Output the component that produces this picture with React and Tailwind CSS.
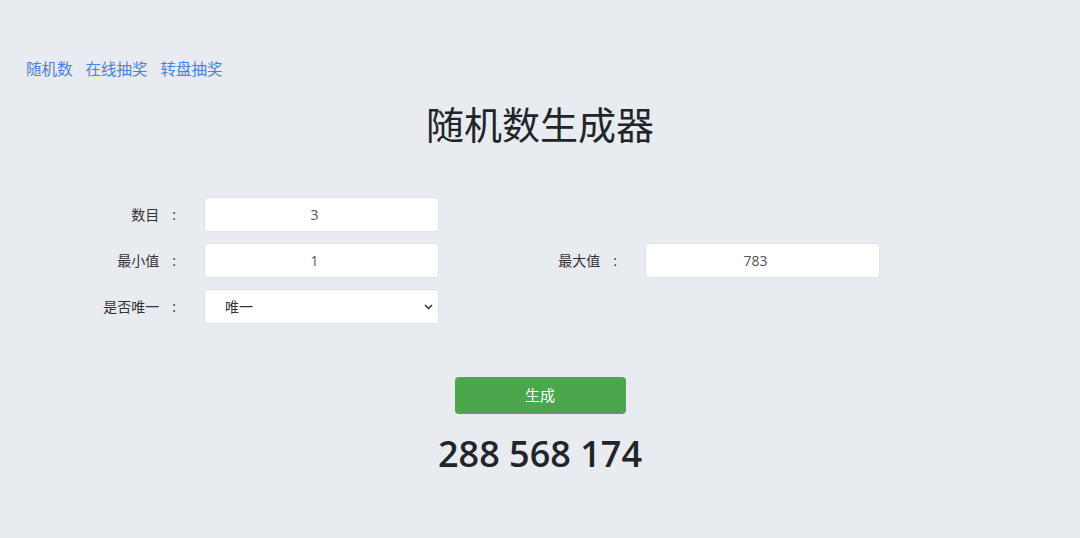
import { useState } from 'react';

const font = { fontFamily: '"Open Sans", "Noto Sans CJK SC", sans-serif' };

function Field({ label, children }) {
  return (
    <div className="flex items-center">
      <label className="flex w-[105px] shrink-0 justify-end pr-[28px] text-[14px] text-[#333]">
        <span>{label}</span>
        <span className="ml-[13px]">:</span>
      </label>
      {children}
    </div>
  );
}

export default function App() {
  const [count, setCount] = useState('3');
  const [min, setMin] = useState('1');
  const [max, setMax] = useState('783');
  const [unique, setUnique] = useState('唯一');

  const inputCls =
    'h-[35px] w-[235px] rounded-[4px] border border-[#dfe3e8] bg-white pr-[14px] text-center text-[14px] text-[#555] outline-none';

  return (
    <div className="min-h-[538px] w-full bg-[#e8ebef] text-[#212529]" style={font}>
      <nav className="flex gap-[13px] pl-[26px] pt-[58px] text-[15.5px] leading-[22px] text-[#4a80e0]">
        <a href="#">随机数</a>
        <a href="#">在线抽奖</a>
        <a href="#">转盘抽奖</a>
      </nav>

      <h1 className="mt-[15px] text-center text-[38px] leading-[58px] text-[#212529]">随机数生成器</h1>

      <div className="mx-auto mt-[44px] grid w-[882px] grid-cols-2 gap-y-[11px]">
        <Field label="数目">
          <input className={inputCls} value={count} onChange={(e) => setCount(e.target.value)} />
        </Field>
        <div />
        <Field label="最小值">
          <input className={inputCls} value={min} onChange={(e) => setMin(e.target.value)} />
        </Field>
        <Field label="最大值">
          <input className={inputCls} value={max} onChange={(e) => setMax(e.target.value)} />
        </Field>
        <Field label="是否唯一">
          <div className="relative">
            <select
              className="h-[35px] w-[235px] appearance-none rounded-[4px] border border-[#dfe3e8] bg-white pl-[20px] text-[14px] text-[#333] outline-none"
              value={unique}
              onChange={(e) => setUnique(e.target.value)}
            >
              <option>唯一</option>
              <option>可重复</option>
            </select>
            <svg
              className="pointer-events-none absolute right-[6px] top-[15px]"
              width="9"
              height="6"
              viewBox="0 0 9 6"
              fill="none"
              stroke="#333"
              strokeWidth="1.5"
            >
              <path d="M1 1l3.5 3.5L8 1" />
            </svg>
          </div>
        </Field>
      </div>

      <div className="mt-[53px] flex flex-col items-center">
        <button className="h-[37px] w-[171px] rounded-[4px] bg-[#4ca64c] text-[15px] text-white">生成</button>
        <div className="mt-[14px] text-[36px] font-semibold leading-[52px] text-[#212529]">288 568 174</div>
      </div>
    </div>
  );
}
